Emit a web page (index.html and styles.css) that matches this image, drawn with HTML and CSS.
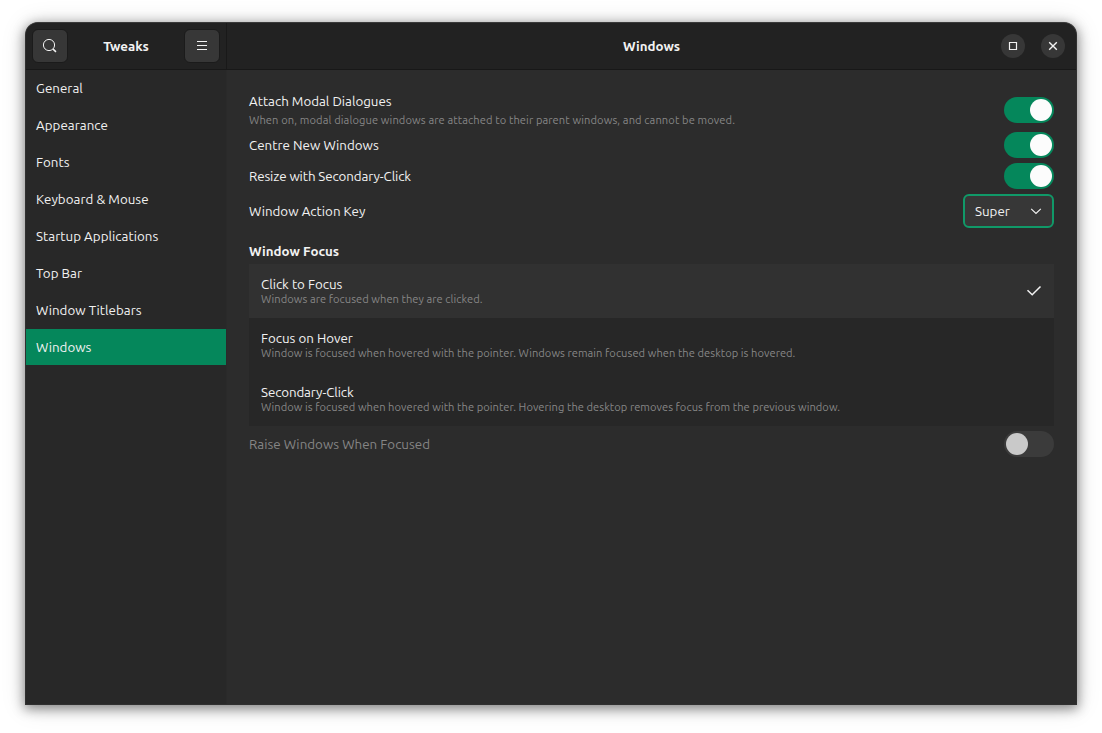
FILE: index.html
```html
<!DOCTYPE html>
<html lang="en-GB">
<head>
<meta charset="utf-8">
<title>Tweaks</title>
<link rel="stylesheet" href="styles.css">
</head>
<body>
<div class="window">
  <aside class="sidebar">
    <header class="bar side-bar">
      <button class="tool" aria-label="Search"><svg width="16" height="16" viewBox="0 0 16 16"><circle cx="7" cy="7" r="5.6"/><path class="thick" d="M11.1 11.1 14 13.9"/></svg></button>
      <h1 class="title">Tweaks</h1>
      <button class="tool" aria-label="Menu"><svg width="16" height="16" viewBox="0 0 16 16"><path d="M3 3.5H13M3 7.5H13M3 11.5H13"/></svg></button>
    </header>
    <nav class="nav">
      <a class="nav-item">General</a>
      <a class="nav-item">Appearance</a>
      <a class="nav-item">Fonts</a>
      <a class="nav-item">Keyboard &amp; Mouse</a>
      <a class="nav-item">Startup Applications</a>
      <a class="nav-item">Top Bar</a>
      <a class="nav-item">Window Titlebars</a>
      <a class="nav-item selected">Windows</a>
    </nav>
  </aside>
  <main class="main">
    <header class="bar main-bar">
      <h2 class="title">Windows</h2>
      <div class="controls">
        <button class="control" aria-label="Maximise"><svg width="16" height="16" viewBox="0 0 16 16"><path class="square" d="M4.5 4.5H11.5V11.5H4.5Z"/></svg></button>
        <button class="control" aria-label="Close"><svg width="16" height="16" viewBox="0 0 16 16"><path class="cross" d="M4.2 4.2 11.8 11.8M11.8 4.2 4.2 11.8"/></svg></button>
      </div>
    </header>
    <section class="content">
      <div class="row row-tall">
        <div class="labels"><div class="label">Attach Modal Dialogues</div><div class="hint">When on, modal dialogue windows are attached to their parent windows, and cannot be moved.</div></div>
        <span class="switch on"></span>
      </div>
      <div class="row"><div class="label">Centre New Windows</div><span class="switch on"></span></div>
      <div class="row"><div class="label snug">Resize with Secondary-Click</div><span class="switch on"></span></div>
      <div class="row row-select">
        <div class="label">Window Action Key</div>
        <button class="select"><span>Super</span><svg width="16" height="16" viewBox="0 0 16 16"><path d="M3.2 5.9 8 10.4 12.8 5.9"/></svg></button>
      </div>
      <h3 class="heading">Window Focus</h3>
      <div class="options">
        <div class="option chosen">
          <div><div class="label">Click to Focus</div><div class="hint">Windows are focused when they are clicked.</div></div>
          <svg width="16" height="16" viewBox="0 0 16 16"><path class="tick" d="M1.5 7.3 6.2 11.7 14.5 3.5"/></svg>
        </div>
        <div class="option"><div><div class="label">Focus on Hover</div><div class="hint">Window is focused when hovered with the pointer. Windows remain focused when the desktop is hovered.</div></div></div>
        <div class="option"><div><div class="label snug">Secondary-Click</div><div class="hint">Window is focused when hovered with the pointer. Hovering the desktop removes focus from the previous window.</div></div></div>
      </div>
      <div class="row row-disabled"><div class="label">Raise Windows When Focused</div><span class="switch"></span></div>
    </section>
  </main>
</div>
</body>
</html>
```

FILE: styles.css
```css
* { box-sizing: border-box; }
body {
  margin: 0;
  height: 733px;
  padding: 22px 25px 28px;
  overflow: hidden;
  background: #fff;
  color: #f2f2f2;
  font-family: Ubuntu, "Noto Sans", sans-serif;
  font-size: 13.33px;
}
h1, h2, h3 { margin: 0; font-size: 13.33px; font-weight: 700; }
button { margin: 0; padding: 0; font: inherit; color: inherit; border: 0; }
svg { display: block; fill: none; stroke: #f2f2f2; stroke-width: 1; }
.thick { stroke-width: 1.5; }
.square { stroke-width: 1.2; }
.cross { stroke-width: 1.4; }
.tick { stroke-width: 1.5; }

.window {
  display: flex;
  height: 683px;
  overflow: hidden;
  border: 1px solid #303030;
  border-top-color: #3a3a3a;
  border-radius: 13px 13px 0 0;
  background: #2c2c2c;
  box-shadow: 0 3px 12px 1px rgba(0, 0, 0, .42), 0 2px 24px rgba(0, 0, 0, .15);
}
.sidebar { width: 201px; background: #282828; border-right: 1px solid #2a2a2a; }
.main { flex: 1; min-width: 0; }
.bar {
  display: flex;
  align-items: center;
  height: 47px;
  background: #222;
  border-bottom: 1px solid #181818;
}
.side-bar { width: 201px; padding: 0 6px; justify-content: space-between; border-right: 1px solid #191919; }
.title { padding-top: 2px; line-height: 18px; }
.side-bar .title { letter-spacing: -.05px; }
.tool {
  display: grid;
  place-items: center;
  width: 36px;
  height: 34px;
  border: 1px solid #1b1b1b;
  border-radius: 6px;
  background: #373737;
}
.main-bar { display: grid; grid-template-columns: 1fr auto 1fr; }
.main-bar .title { grid-column: 2; }
.controls { display: flex; gap: 16px; justify-content: flex-end; padding-right: 11px; }
.control {
  display: grid;
  place-items: center;
  width: 24px;
  height: 24px;
  border-radius: 50%;
  background: #373737;
}

.nav-item { display: block; height: 36px; margin-bottom: 1px; padding-left: 10px; line-height: 38px; letter-spacing: .04px; }
.nav { width: 200px; }
.selected { background: #05875b; }

.content { padding: 22px 22px 0; }
.label { line-height: 20px; white-space: nowrap; }
.row > .label { padding-top: 2px; line-height: 18px; }
.row > .label:not(.snug) { letter-spacing: .03px; }
.snug { letter-spacing: -.1px; }
.hint { color: #868686; font-size: 11.11px; letter-spacing: .05px; line-height: 14px; white-space: nowrap; }
.row { display: flex; align-items: center; justify-content: space-between; height: 26px; margin-bottom: 5px; }
.row-tall { height: 36px; margin-bottom: 4px; }
.row-tall .label { line-height: 17px; }
.row-tall .hint { margin-top: 3px; letter-spacing: .11px; }
.row-select { height: 34px; margin-bottom: 14px; }
.row-disabled { margin-top: 5px; color: #858585; }
.switch {
  display: flex;
  width: 50px;
  height: 26px;
  padding: 2px;
  border-radius: 13px;
  background: #3b3b3b;
}
.switch::before { content: ""; width: 22px; height: 22px; border-radius: 50%; background: #c9c9c9; }
.on { justify-content: flex-end; background: #05875b; }
.on::before { background: #fcfcfc; }
.select {
  display: flex;
  align-items: center;
  justify-content: space-between;
  width: 91px;
  height: 34px;
  padding: 0 8px 0 10px;
  border: 2px solid #109968;
  border-radius: 6px;
  background: #373737;
}
.select svg { stroke-width: 1.2; }
.heading { height: 22px; line-height: 20px; }
.options { background: #272727; }
.option { display: flex; align-items: center; justify-content: space-between; height: 54px; padding: 0 12px; }
.option .label { line-height: 18px; }
.option .hint { margin-top: -2px; }
.chosen { background: #313131; }
```
